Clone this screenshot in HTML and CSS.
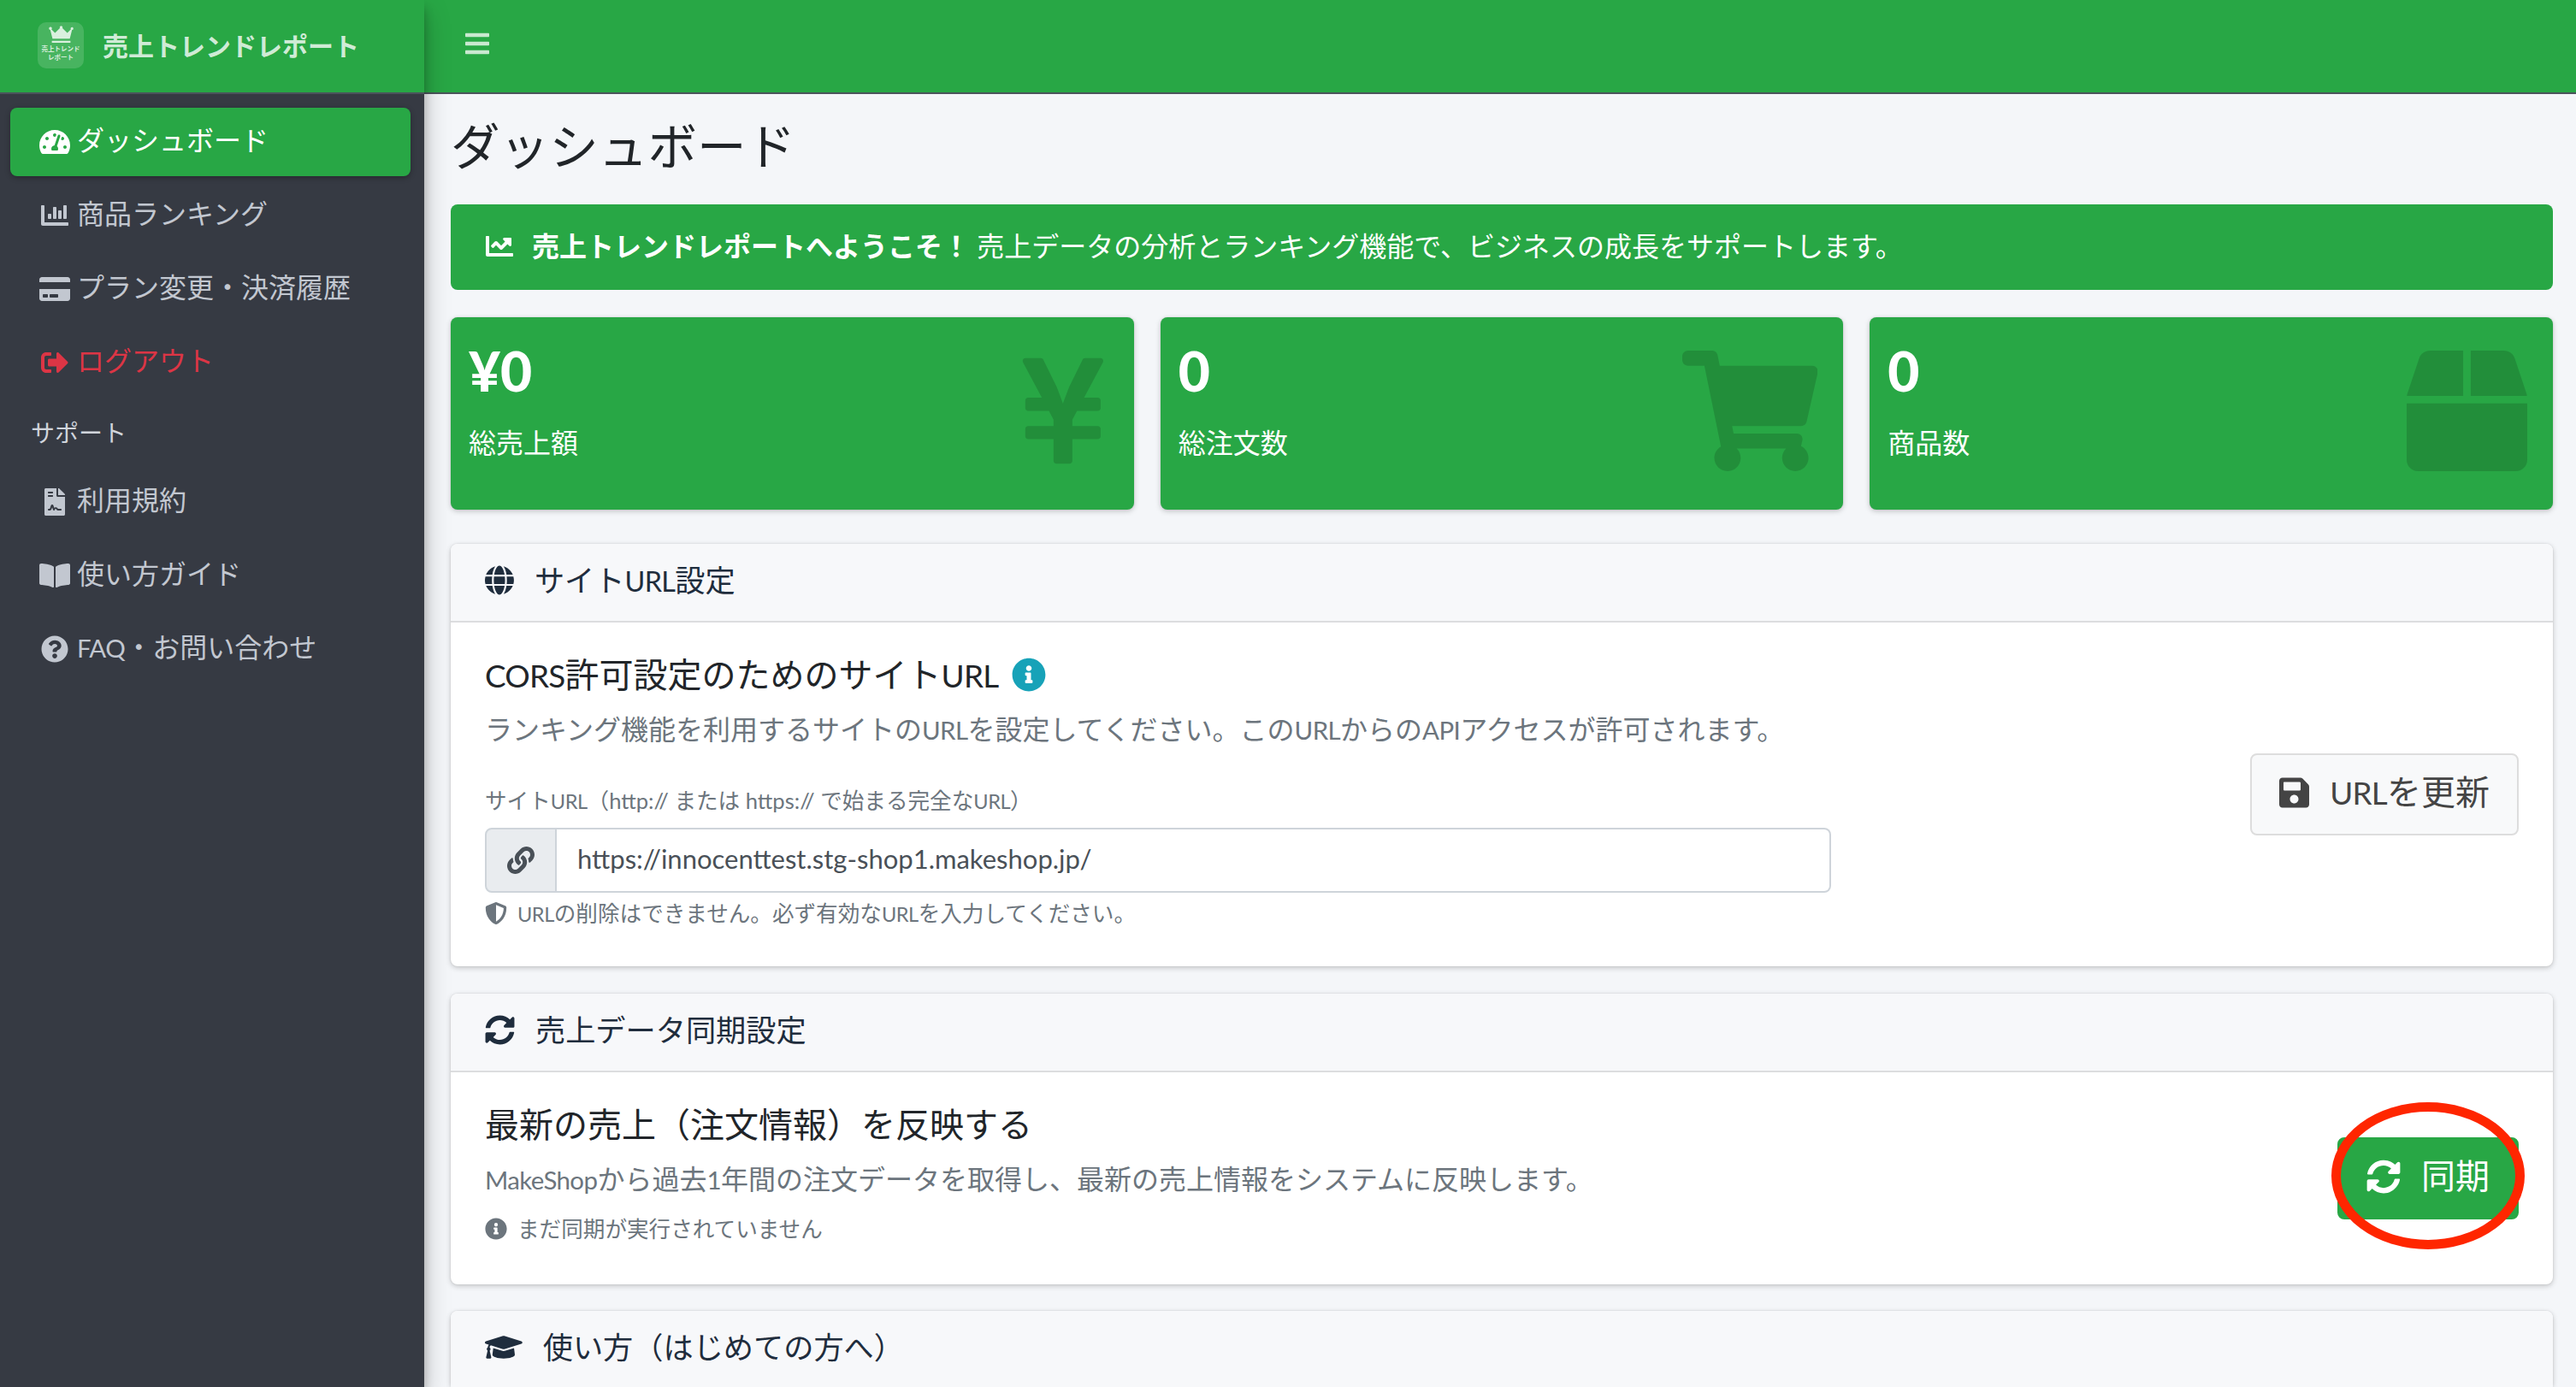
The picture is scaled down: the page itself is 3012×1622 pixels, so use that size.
FILE: index.html
```html
<!DOCTYPE html>
<html lang="ja">
<head>
    <meta charset="UTF-8">
    <meta name="viewport" content="width=device-width, initial-scale=1.0">
    <title>売上トレンドレポート</title>
    <link rel="stylesheet" href="styles.css">
</head>
<body>
<div class="wrapper">

    <aside class="sidebar">
        <div class="brand">
            <div class="brand-logo">
                <svg class="brand-crown" viewBox="0 0 30 22"><path d="M2 1.6a1.6 1.6 0 0 1 1 2.9L7.5 9 13.6 3a1.7 1.7 0 1 1 2.8 0L22.500 9 27 4.500a1.600 1.600 0 1 1 1.300.7L25.600 16H4.400L1.700 5.200A1.800 1.800 0 0 1 2 1.600zM3.600 18.500h22.800V21H3.600z"/></svg>
                <span class="brand-logo-text">売上トレンド<br>レポート</span>
            </div>
            <span class="brand-text">売上トレンドレポート</span>
        </div>
        <nav class="nav">
            <a class="nav-item active"><span class="nav-icon"><svg viewBox="0 0 576 512"><path d="M288 32C128.94 32 0 160.94 0 320c0 52.8 14.25 102.26 39.06 144.8 5.61 9.62 16.3 15.2 27.44 15.2h443c11.14 0 21.83-5.58 27.44-15.2C561.75 422.26 576 372.8 576 320c0-159.06-128.94-288-288-288zm0 64c14.71 0 26.58 10.13 30.32 23.65-1.11 2.26-2.64 4.23-3.45 6.67l-9.22 27.67c-5.13 3.49-10.97 6.01-17.64 6.01-17.67 0-32-14.33-32-32S270.33 96 288 96zM96 384c-17.67 0-32-14.33-32-32s14.33-32 32-32 32 14.33 32 32-14.33 32-32 32zm48-160c-17.67 0-32-14.33-32-32s14.33-32 32-32 32 14.33 32 32-14.33 32-32 32zm246.77-72.41l-61.33 184C343.13 347.33 352 364.54 352 384c0 11.72-3.38 22.55-8.88 32H232.88c-5.5-9.45-8.88-20.28-8.88-32 0-33.94 26.5-61.43 59.9-63.59l61.34-184.01c4.17-12.56 17.73-19.45 30.36-15.17 12.57 4.19 19.35 17.79 15.17 30.36zm14.66 57.2l15.52-46.55c3.47-1.29 7.13-2.23 11.05-2.23 17.67 0 32 14.33 32 32s-14.33 32-32 32c-11.38-.01-20.89-6.28-26.57-15.22zM480 384c-17.67 0-32-14.33-32-32s14.33-32 32-32 32 14.33 32 32-14.33 32-32 32z"/></svg></span>ダッシュボード</a>
            <a class="nav-item"><span class="nav-icon"><svg viewBox="0 0 512 512"><path d="M332.8 320h38.4c6.4 0 12.8-6.4 12.8-12.8V172.8c0-6.4-6.4-12.8-12.8-12.8h-38.4c-6.4 0-12.8 6.4-12.8 12.8v134.4c0 6.4 6.4 12.8 12.8 12.8zm96 0h38.4c6.4 0 12.8-6.4 12.8-12.8V76.8c0-6.4-6.4-12.8-12.8-12.8h-38.4c-6.4 0-12.8 6.4-12.8 12.8v230.4c0 6.4 6.4 12.8 12.8 12.8zm-288 0h38.4c6.4 0 12.8-6.4 12.8-12.8v-70.4c0-6.4-6.4-12.8-12.8-12.8h-38.4c-6.4 0-12.8 6.4-12.8 12.8v70.4c0 6.4 6.4 12.8 12.8 12.8zm96 0h38.4c6.4 0 12.8-6.4 12.8-12.8V108.8c0-6.4-6.4-12.8-12.8-12.8h-38.4c-6.4 0-12.8 6.4-12.8 12.8v198.4c0 6.4 6.4 12.8 12.8 12.8zM496 384H64V80c0-8.84-7.16-16-16-16H16C7.16 64 0 71.16 0 80v336c0 17.67 14.33 32 32 32h464c8.84 0 16-7.16 16-16v-32c0-8.84-7.16-16-16-16z"/></svg></span>商品ランキング</a>
            <a class="nav-item"><span class="nav-icon"><svg viewBox="0 0 576 512"><path d="M0 432c0 26.5 21.5 48 48 48h480c26.5 0 48-21.500 48-48V256H0v176zm192-68c0-6.600 5.400-12 12-12h136c6.600 0 12 5.400 12 12v40c0 6.600-5.400 12-12 12H204c-6.600 0-12-5.400-12-12v-40zm-128 0c0-6.600 5.400-12 12-12h72c6.600 0 12 5.400 12 12v40c0 6.600-5.400 12-12 12H76c-6.600 0-12-5.400-12-12v-40zM576 80v48H0V80c0-26.500 21.500-48 48-48h480c26.500 0 48 21.500 48 48z"/></svg></span>プラン変更・決済履歴</a>
            <a class="nav-item logout"><span class="nav-icon"><svg viewBox="0 0 512 512"><path d="M497 273L329 441c-15 15-41 4.500-41-17v-96H152c-13.300 0-24-10.700-24-24v-96c0-13.300 10.700-24 24-24h136V88c0-21.400 25.900-32 41-17l168 168c9.300 9.400 9.300 24.600 0 34zM192 436v-40c0-6.600-5.400-12-12-12H96c-17.700 0-32-14.300-32-32V160c0-17.700 14.300-32 32-32h84c6.600 0 12-5.400 12-12V76c0-6.600-5.400-12-12-12H96c-53 0-96 43-96 96v192c0 53 43 96 96 96h84c6.600 0 12-5.400 12-12z"/></svg></span>ログアウト</a>
            <div class="nav-header">サポート</div>
            <a class="nav-item"><span class="nav-icon"><svg viewBox="0 0 384 512"><path d="M224 136V0H24C10.700 0 0 10.700 0 24v464c0 13.300 10.700 24 24 24h336c13.300 0 24-10.700 24-24V160H248c-13.200 0-24-10.800-24-24zM64 72c0-4.420 3.580-8 8-8h80c4.420 0 8 3.580 8 8v16c0 4.420-3.580 8-8 8H72c-4.420 0-8-3.580-8-8V72zm0 64c0-4.420 3.580-8 8-8h80c4.420 0 8 3.580 8 8v16c0 4.420-3.580 8-8 8H72c-4.420 0-8-3.580-8-8v-16zm192.810 248H304c8.840 0 16 7.160 16 16s-7.160 16-16 16h-47.190c-16.450 0-31.270-9.140-38.640-23.860-2.950-5.920-8.090-6.520-10.170-6.520s-7.220.59-10.020 6.190l-7.670 15.340a15.986 15.986 0 0 1-14.310 8.840c-.38 0-.75-.02-1.140-.05-6.450-.45-12-4.750-14.030-10.890L144 354.590l-10.610 31.880c-5.890 17.660-22.380 29.530-41 29.530H80c-8.840 0-16-7.160-16-16s7.160-16 16-16h12.390c4.830 0 9.110-3.080 10.640-7.660l18.190-54.640c3.300-9.810 12.440-16.410 22.780-16.410s19.480 6.590 22.770 16.410l13.880 41.640c19.770-16.190 54.050-9.700 66 14.160 2.020 4.060 5.960 6.500 10.160 6.500zM377 105L279.100 7c-4.500-4.500-10.600-7-17-7H256v128h128v-6.100c0-6.300-2.500-12.400-7-16.900z"/></svg></span>利用規約</a>
            <a class="nav-item"><span class="nav-icon"><svg viewBox="0 0 576 512"><path d="M542.220 32.050c-54.800 3.110-163.720 14.430-230.960 55.590-4.640 2.840-7.270 7.890-7.270 13.170v363.870c0 11.550 12.630 18.850 23.280 13.490 69.180-34.820 169.230-44.320 218.700-46.920 16.890-.89 30.020-14.430 30.020-30.660V62.750c.01-17.710-15.350-31.740-33.770-30.700zM264.730 87.640C197.500 46.480 88.580 35.170 33.780 32.050 15.360 31.010 0 45.040 0 62.750V400.600c0 16.240 13.130 29.780 30.020 30.660 49.490 2.600 149.590 12.110 218.770 46.950 10.620 5.350 23.210-1.940 23.210-13.460V100.630c0-5.290-2.620-10.140-7.270-12.990z"/></svg></span>使い方ガイド</a>
            <a class="nav-item"><span class="nav-icon"><svg viewBox="0 0 512 512"><path d="M504 256c0 136.997-111.043 248-248 248S8 392.997 8 256C8 119.083 119.043 8 256 8s248 111.083 248 248zM262.655 90c-54.497 0-89.255 22.957-116.549 63.758-3.536 5.286-2.353 12.415 2.715 16.258l34.699 26.310c5.205 3.947 12.621 3.008 16.665-2.122 17.864-22.658 30.113-35.797 57.303-35.797 20.429 0 45.698 13.148 45.698 32.958 0 14.976-12.363 22.667-32.534 33.976C247.128 238.528 216 254.941 216 296v4c0 6.627 5.373 12 12 12h56c6.627 0 12-5.373 12-12v-1.333c0-28.462 83.186-29.647 83.186-106.667 0-58.002-60.165-102-116.531-102zM256 338c-25.365 0-46 20.635-46 46 0 25.364 20.635 46 46 46s46-20.636 46-46c0-25.365-20.635-46-46-46z"/></svg></span><span><span class="en">FAQ</span>・お問い合わせ</span></a>
        </nav>
    </aside>

    <div class="main">
        <header class="topbar">
            <svg class="menu-icon" viewBox="0 0 448 512"><path d="M16 132h416c8.837 0 16-7.163 16-16V76c0-8.837-7.163-16-16-16H16C7.163 60 0 67.163 0 76v40c0 8.837 7.163 16 16 16zm0 160h416c8.837 0 16-7.163 16-16v-40c0-8.837-7.163-16-16-16H16c-8.837 0-16 7.163-16 16v40c0 8.837 7.163 16 16 16zm0 160h416c8.837 0 16-7.163 16-16v-40c0-8.837-7.163-16-16-16H16c-8.837 0-16 7.163-16 16v40c0 8.837 7.163 16 16 16z"/></svg>
        </header>

        <main class="content">
            <h1 class="page-title">ダッシュボード</h1>

            <div class="welcome">
                <svg class="welcome-icon" viewBox="0 0 512 512"><path d="M496 384H64V80c0-8.840-7.160-16-16-16H16C7.160 64 0 71.160 0 80v336c0 17.670 14.330 32 32 32h464c8.840 0 16-7.160 16-16v-32c0-8.840-7.160-16-16-16zM464 96H345.940c-21.380 0-32.090 25.850-16.970 40.970l32.400 32.400L288 242.750l-73.370-73.370c-12.500-12.500-32.760-12.500-45.250 0l-68.690 68.690c-6.250 6.250-6.250 16.380 0 22.630l22.620 22.620c6.250 6.250 16.380 6.250 22.630 0L192 237.250l73.370 73.370c12.500 12.500 32.760 12.500 45.250 0l96-96 32.400 32.400c15.120 15.120 40.970 4.410 40.970-16.970V112c.01-8.840-7.150-16-15.990-16z"/></svg>
                <p><strong>売上トレンドレポートへようこそ！</strong> 売上データの分析とランキング機能で、ビジネスの成長をサポートします。</p>
            </div>

            <div class="stats">
                <div class="stat">
                    <div class="stat-value">¥0</div>
                    <div class="stat-label">総売上額</div>
                    <svg class="stat-icon" viewBox="0 0 384 512"><path d="M351.200 32h-65.300c-4.600 0-8.800 2.600-10.800 6.700l-55.400 113.200c-14.500 34.700-27.100 71.900-27.100 71.900h-1.300s-12.600-37.200-27.100-71.900L108.800 38.700c-2-4.100-6.200-6.700-10.800-6.700H32.800c-9.100 0-14.800 9.700-10.600 17.600L102.300 200H44c-6.600 0-12 5.400-12 12v32c0 6.600 5.400 12 12 12h88.200l19.800 37.200V320H44c-6.600 0-12 5.400-12 12v32c0 6.600 5.400 12 12 12h108v92c0 6.600 5.400 12 12 12h56c6.600 0 12-5.400 12-12v-92h108c6.600 0 12-5.400 12-12v-32c0-6.600-5.400-12-12-12H232v-26.800l19.800-37.200H340c6.600 0 12-5.400 12-12v-32c0-6.600-5.400-12-12-12h-58.300l80.100-150.400c4.200-7.900-1.500-17.600-10.600-17.600z"/></svg>
                </div>
                <div class="stat">
                    <div class="stat-value">0</div>
                    <div class="stat-label">総注文数</div>
                    <svg class="stat-icon" viewBox="0 0 576 512"><path d="M528.120 301.319l47.273-208C578.806 78.301 567.391 64 551.990 64H159.208l-9.166-44.810C147.758 8.021 137.930 0 126.529 0H24C10.745 0 0 10.745 0 24v16c0 13.255 10.745 24 24 24h69.883l70.248 343.435C147.325 417.100 136 435.222 136 456c0 30.928 25.072 56 56 56s56-25.072 56-56c0-15.674-6.447-29.835-16.824-40h209.647C430.447 426.165 424 440.326 424 456c0 30.928 25.072 56 56 56s56-25.072 56-56c0-22.172-12.888-41.332-31.579-50.405l5.517-24.276c3.413-15.018-8.002-29.319-23.403-29.319H218.117l-6.545-32h293.145c11.206 0 20.920-7.754 23.403-18.681z"/></svg>
                </div>
                <div class="stat">
                    <div class="stat-value">0</div>
                    <div class="stat-label">商品数</div>
                    <svg class="stat-icon" viewBox="0 0 512 512"><path d="M509.500 184.600L458.900 32.800C452.400 13.200 434.100 0 413.400 0H272v192h238.700c-.4-2.500-.4-5-1.200-7.400zM240 0H98.600c-20.700 0-39 13.200-45.500 32.800L2.500 184.600c-.8 2.400-.8 4.900-1.200 7.400H240V0zM0 224v240c0 26.500 21.500 48 48 48h416c26.500 0 48-21.500 48-48V224H0z"/></svg>
                </div>
            </div>

            <section class="card">
                <div class="card-header">
                    <svg class="card-icon" viewBox="0 0 496 512"><path d="M336.500 160C322 70.700 287.800 8 248 8s-74 62.700-88.500 152h177zM152 256c0 22.200 1.200 43.500 3.300 64h185.300c2.100-20.500 3.300-41.800 3.300-64s-1.200-43.500-3.300-64H155.300c-2.100 20.500-3.300 41.800-3.300 64zm324.700-96c-28.600-67.900-86.500-120.400-158-141.600 24.400 33.800 41.200 84.700 50 141.600h108zM177.200 18.400C105.800 39.600 47.800 92.100 19.300 160h108c8.700-56.900 25.500-107.800 49.900-141.600zM487.400 192H372.700c2.100 21 3.300 42.500 3.300 64s-1.200 43-3.300 64h114.600c5.500-20.500 8.600-41.800 8.600-64s-3.100-43.500-8.500-64zM120 256c0-21.500 1.200-43 3.300-64H8.600C3.200 212.500 0 233.800 0 256s3.200 43.500 8.600 64h114.600c-2-21-3.200-42.500-3.200-64zm39.500 96c14.500 89.300 48.700 152 88.500 152s74-62.700 88.500-152h-177zm159.300 141.600c71.400-21.200 129.400-73.700 158-141.600h-108c-8.800 56.900-25.600 107.800-50 141.600zM19.300 352c28.600 67.900 86.500 120.400 158 141.600-24.400-33.800-41.200-84.700-50-141.600h-108z"/></svg>
                    <span>サイト<span class="en">URL</span>設定</span>
                </div>
                <div class="card-body">
                    <div class="url-form">
                        <h5 class="card-title"><span><span class="en">CORS</span>許可設定のためのサイト<span class="en">URL</span></span> <svg class="title-info" viewBox="0 0 512 512"><path d="M256 8C119.043 8 8 119.083 8 256c0 136.997 111.043 248 248 248s248-111.003 248-248C504 119.083 392.957 8 256 8zm0 110c23.196 0 42 18.804 42 42s-18.804 42-42 42-42-18.804-42-42 18.804-42 42-42zm56 254c0 6.627-5.373 12-12 12h-88c-6.627 0-12-5.373-12-12v-24c0-6.627 5.373-12 12-12h12v-64h-12c-6.627 0-12-5.373-12-12v-24c0-6.627 5.373-12 12-12h64c6.627 0 12 5.373 12 12v100h12c6.627 0 12 5.373 12 12v24z"/></svg></h5>
                        <p class="card-desc">ランキング機能を利用するサイトの<span class="en">URL</span>を設定してください。この<span class="en">URL</span>からの<span class="en">API</span>アクセスが許可されます。</p>
                        <label class="field-label">サイト<span class="en">URL</span>（http:// または https:// で始まる完全な<span class="en">URL</span>）</label>
                        <div class="input-group">
                            <span class="input-addon"><svg viewBox="0 0 512 512"><path d="M326.612 185.391c59.747 59.809 58.927 155.698.36 214.590-.11.12-.24.25-.36.37l-67.200 67.200c-59.270 59.270-155.699 59.262-214.960 0-59.270-59.260-59.270-155.700 0-214.960l37.106-37.106c9.840-9.840 26.786-3.300 27.294 10.606.648 17.722 3.826 35.527 9.690 52.721 1.986 5.822.567 12.262-3.783 16.612l-13.087 13.087c-28.026 28.026-28.905 73.660-1.155 101.960 28.024 28.579 74.086 28.749 102.325.51l67.200-67.190c28.191-28.191 28.073-73.757 0-101.830-3.701-3.694-7.429-6.564-10.341-8.569a16.037 16.037 0 0 1-6.947-12.606c-.396-10.567 3.348-21.456 11.698-29.806l21.054-21.055c5.521-5.521 14.182-6.199 20.584-1.731a152.482 152.482 0 0 1 20.522 17.197zM467.547 44.449c-59.261-59.262-155.690-59.270-214.960 0l-67.200 67.200c-.12.12-.25.25-.36.37-58.566 58.892-59.387 154.781.36 214.590a152.454 152.454 0 0 0 20.521 17.196c6.402 4.468 15.064 3.789 20.584-1.731l21.054-21.055c8.350-8.350 12.094-19.239 11.698-29.806a16.037 16.037 0 0 0-6.947-12.606c-2.912-2.005-6.640-4.875-10.341-8.569-28.073-28.073-28.191-73.639 0-101.830l67.200-67.190c28.239-28.239 74.300-28.069 102.325.51 27.750 28.300 26.872 73.934-1.155 101.960l-13.087 13.087c-4.350 4.350-5.769 10.790-3.783 16.612 5.864 17.194 9.042 34.999 9.690 52.721.509 13.906 17.454 20.446 27.294 10.606l37.106-37.106c59.271-59.259 59.271-155.699.001-214.959z"/></svg></span>
                            <input class="input" type="text" value="https://innocenttest.stg-shop1.makeshop.jp/">
                        </div>
                        <div class="help">
                            <svg viewBox="0 0 512 512"><path d="M466.500 83.700l-192-80a48.150 48.150 0 0 0-36.900 0l-192 80C27.700 91.100 16 108.600 16 128c0 198.500 114.500 335.700 221.500 380.300 11.800 4.900 25.100 4.900 36.900 0C360.100 472.600 496 349.300 496 128c0-19.400-11.700-36.900-29.500-44.300zM256.100 446.300l-.1-381 175.900 73.300c-3.300 151.400-82.100 261.100-175.800 307.700z"/></svg>
                            <span><span class="en">URL</span>の削除はできません。必ず有効な<span class="en">URL</span>を入力してください。</span>
                        </div>
                    </div>
                    <button class="btn btn-light btn-url">
                        <svg viewBox="0 0 448 512"><path d="M433.941 129.941l-83.882-83.882A48 48 0 0 0 316.118 32H48C21.490 32 0 53.490 0 80v352c0 26.510 21.490 48 48 48h352c26.510 0 48-21.490 48-48V163.882a48 48 0 0 0-14.059-33.941zM224 416c-35.346 0-64-28.654-64-64 0-35.346 28.654-64 64-64s64 28.654 64 64c0 35.346-28.654 64-64 64zm96-304.520V212c0 6.627-5.373 12-12 12H76c-6.627 0-12-5.373-12-12V108c0-6.627 5.373-12 12-12h228.520c3.183 0 6.235 1.264 8.485 3.515l3.480 3.480A11.996 11.996 0 0 1 320 111.480z"/></svg>
                        <span class="btn-text"><span class="en">URL</span>を更新</span>
                    </button>
                </div>
            </section>

            <section class="card">
                <div class="card-header">
                    <svg class="card-icon" viewBox="0 0 512 512"><path d="M370.720 133.280C339.458 104.008 298.888 87.962 255.848 88c-77.458.068-144.328 53.178-162.791 126.850-1.344 5.363-6.122 9.150-11.651 9.150H24.103c-7.498 0-13.194-6.807-11.807-14.176C33.933 94.924 134.813 8 256 8c66.448 0 126.791 26.136 171.315 68.685L463.030 40.970C478.149 25.851 504 36.559 504 57.941V192c0 13.255-10.745 24-24 24H345.941c-21.382 0-32.090-25.851-16.971-40.971l41.750-41.749zM32 296h134.059c21.382 0 32.090 25.851 16.971 40.971l-41.750 41.750c31.262 29.273 71.835 45.319 114.876 45.280 77.418-.07 144.315-53.144 162.787-126.849 1.344-5.363 6.122-9.150 11.651-9.150h57.304c7.498 0 13.194 6.807 11.807 14.176C478.067 417.076 377.187 504 256 504c-66.448 0-126.791-26.136-171.315-68.685L48.970 471.030C33.851 486.149 8 475.441 8 454.059V320c0-13.255 10.745-24 24-24z"/></svg>
                    <span>売上データ同期設定</span>
                </div>
                <div class="card-body sync-body">
                    <div>
                        <h5 class="card-title">最新の売上（注文情報）を反映する</h5>
                        <p class="card-desc"><span class="en">MakeShop</span>から過去<span class="en">1</span>年間の注文データを取得し、最新の売上情報をシステムに反映します。</p>
                        <div class="help sync-note">
                            <svg viewBox="0 0 512 512"><path d="M256 8C119.043 8 8 119.083 8 256c0 136.997 111.043 248 248 248s248-111.003 248-248C504 119.083 392.957 8 256 8zm0 110c23.196 0 42 18.804 42 42s-18.804 42-42 42-42-18.804-42-42 18.804-42 42-42zm56 254c0 6.627-5.373 12-12 12h-88c-6.627 0-12-5.373-12-12v-24c0-6.627 5.373-12 12-12h12v-64h-12c-6.627 0-12-5.373-12-12v-24c0-6.627 5.373-12 12-12h64c6.627 0 12 5.373 12 12v100h12c6.627 0 12 5.373 12 12v24z"/></svg>
                            まだ同期が実行されていません
                        </div>
                    </div>
                    <div class="sync-action">
                        <button class="btn btn-green">
                            <svg viewBox="0 0 512 512"><path d="M370.720 133.280C339.458 104.008 298.888 87.962 255.848 88c-77.458.068-144.328 53.178-162.791 126.850-1.344 5.363-6.122 9.150-11.651 9.150H24.103c-7.498 0-13.194-6.807-11.807-14.176C33.933 94.924 134.813 8 256 8c66.448 0 126.791 26.136 171.315 68.685L463.030 40.970C478.149 25.851 504 36.559 504 57.941V192c0 13.255-10.745 24-24 24H345.941c-21.382 0-32.090-25.851-16.971-40.971l41.750-41.749zM32 296h134.059c21.382 0 32.090 25.851 16.971 40.971l-41.750 41.750c31.262 29.273 71.835 45.319 114.876 45.280 77.418-.07 144.315-53.144 162.787-126.849 1.344-5.363 6.122-9.150 11.651-9.150h57.304c7.498 0 13.194 6.807 11.807 14.176C478.067 417.076 377.187 504 256 504c-66.448 0-126.791-26.136-171.315-68.685L48.970 471.030C33.851 486.149 8 475.441 8 454.059V320c0-13.255 10.745-24 24-24z"/></svg>
                            <span class="btn-text">同期</span>
                        </button>
                        <svg class="highlight" viewBox="0 0 226 172"><ellipse cx="113" cy="86" rx="107.500" ry="80.500"/></svg>
                    </div>
                </div>
            </section>

            <section class="card card-last">
                <div class="card-header">
                    <svg class="card-icon" viewBox="0 0 640 512"><path d="M622.340 153.200L343.400 67.500c-15.200-4.670-31.600-4.670-46.790 0L17.660 153.200c-23.540 7.230-23.540 38.360 0 45.590l48.630 14.940c-10.670 13.190-17.230 29.280-17.880 46.900C38.780 266.150 32 276.110 32 288c0 10.780 5.680 19.850 13.860 25.650L20.330 428.530C18.110 438.520 25.710 448 35.940 448h56.110c10.240 0 17.840-9.480 15.620-19.470L82.140 313.650C90.320 307.850 96 298.780 96 288c0-11.570-6.470-21.250-15.660-26.870.76-15.020 8.440-28.300 20.690-36.720L296.600 284.500c9.060 2.780 26.440 6.250 46.790 0l278.950-85.700c23.550-7.240 23.550-38.360 0-45.600zM352.790 315.090c-28.530 8.760-52.840 3.920-65.590 0l-145.020-44.550L128 384c0 35.350 85.960 64 192 64s192-28.650 192-64l-14.180-113.470-145.030 44.560z"/></svg>
                    <span>使い方（はじめての方へ）</span>
                </div>
            </section>
        </main>
    </div>

</div>
</body>
</html>
```

FILE: styles.css
```css
* {
    box-sizing: border-box;
}

html, body {
    height: 100%;
    margin: 0;
    overflow: hidden;
}

body {
    font-family: Lato, "Noto Sans CJK JP", sans-serif;
    font-size: 32px;
    line-height: 48px;
    color: #212529;
    background-color: #f4f6f9;
}

svg {
    fill: currentColor;
    flex-shrink: 0;
}

/* latin runs inside japanese text */
.en {
    font-size: 0.92em;
    line-height: 1;
    letter-spacing: -0.02em;
}

.wrapper {
    display: flex;
    height: 100%;
}

/* sidebar */
.sidebar {
    position: relative;
    z-index: 2;
    width: 496px;
    flex-shrink: 0;
    background-color: #363a43;
    box-shadow: 0 14px 28px rgba(0, 0, 0, 0.25), 0 10px 10px rgba(0, 0, 0, 0.22);
}

.brand {
    display: flex;
    align-items: center;
    gap: 22px;
    height: 110px;
    padding: 0 0 2px 44px;
    background-color: #28a745;
    border-bottom: 2px solid #4b545c;
}

.brand-logo {
    display: flex;
    flex-direction: column;
    align-items: center;
    width: 54px;
    height: 54px;
    padding-top: 4px;
    border-radius: 10px;
    color: rgba(255, 255, 255, 0.8);
    background-color: rgba(255, 255, 255, 0.15);
}

.brand-crown {
    width: 29px;
    height: 21px;
}

.brand-logo-text {
    margin-top: 2px;
    font-size: 7.5px;
    line-height: 10px;
    font-weight: 700;
    text-align: center;
    white-space: nowrap;
}

.brand-text {
    font-size: 30px;
    font-weight: 700;
    color: rgba(255, 255, 255, 0.8);
}

.nav {
    display: flex;
    flex-direction: column;
    gap: 6px;
    padding: 16px 16px 0 12px;
}

.nav-item {
    display: flex;
    align-items: center;
    height: 80px;
    padding: 0 0 4px 32px;
    border-radius: 8px;
    color: #c2c7d0;
}

.nav-item.active {
    color: #fff;
    background-color: #28a745;
    box-shadow: 0 2px 6px rgba(0, 0, 0, 0.3);
}

.nav-item.logout {
    color: #dc3545;
}

.nav-icon {
    display: flex;
    justify-content: center;
    width: 40px;
    margin: 4px 6px 0 0;
}

.nav-icon svg {
    height: 32px;
}

.nav-header {
    display: flex;
    align-items: center;
    height: 71px;
    padding-left: 24px;
    font-size: 28px;
    color: #d0d4db;
}

/* top bar */
.main {
    flex: 1;
    min-width: 0;
}

.topbar {
    display: flex;
    align-items: center;
    height: 110px;
    padding: 0 0 6px 48px;
    color: rgba(255, 255, 255, 0.75);
    background-color: #28a745;
    border-bottom: 2px solid #4b545c;
}

.menu-icon {
    height: 32px;
}

.content {
    padding: 0 27px 0 31px;
}

.page-title {
    margin: 0;
    padding-top: 26px;
    font-size: 57.6px;
    line-height: 69px;
    font-weight: 400;
}

/* welcome banner */
.welcome {
    display: flex;
    align-items: center;
    gap: 22px;
    height: 100px;
    margin-top: 34px;
    padding: 0 0 3px 41px;
    border-radius: 8px;
    color: #fff;
    background-color: #28a745;
}

.welcome p {
    margin: 0;
}

.welcome-icon {
    height: 32px;
}

/* stat boxes */
.stats {
    display: grid;
    grid-template-columns: repeat(3, 1fr);
    gap: 31px;
    margin-top: 32px;
}

.stat {
    position: relative;
    height: 225px;
    padding: 25px 21px 21px;
    border-radius: 8px;
    color: #fff;
    background-color: #28a745;
    box-shadow: 0 0 2px rgba(0, 0, 0, 0.125), 0 2px 6px rgba(0, 0, 0, 0.2);
}

.stat-value {
    font-size: 64px;
    line-height: 76px;
    font-weight: 900;
}

.stat-label {
    margin-top: 22px;
}

.stat-icon {
    position: absolute;
    top: 39px;
    right: 30px;
    height: 141px;
    color: rgba(0, 0, 0, 0.15);
}

/* cards */
.card {
    margin-top: 40px;
    border-radius: 8px;
    background-color: #fff;
    box-shadow: 0 0 2px rgba(0, 0, 0, 0.125), 0 2px 6px rgba(0, 0, 0, 0.2);
}

.card + .card {
    margin-top: 32px;
}

.card + .card-last {
    margin-top: 31px;
}

.card-header {
    display: flex;
    align-items: center;
    gap: 24px;
    height: 92px;
    padding: 0 0 6px 40px;
    font-size: 35.2px;
    color: #1f2d3d;
    background-color: #f7f8fa;
    border-bottom: 2px solid #dcdddf;
    border-radius: 8px 8px 0 0;
}

.card-icon {
    height: 35px;
}

.card-body {
    display: flex;
    align-items: center;
    justify-content: space-between;
    padding: 37px 40px 43px;
}

.sync-body {
    padding-bottom: 46px;
}

.url-form {
    width: 1574px;
}

.card-title {
    display: flex;
    align-items: center;
    gap: 16px;
    margin: 0;
    font-size: 40px;
    line-height: 48px;
    font-weight: 400;
}

.title-info {
    height: 40px;
    color: #17a2b8;
}

.card-desc {
    margin: 16px 0 0;
    color: #6c757d;
}

.field-label {
    display: block;
    margin-top: 39px;
    font-size: 25.6px;
    line-height: 40px;
    color: #6c757d;
}

.input-group {
    display: flex;
    height: 76px;
    margin-top: 12px;
}

.input-addon {
    display: flex;
    align-items: center;
    justify-content: center;
    width: 84px;
    color: #495057;
    background-color: #e9ecef;
    border: 2px solid #ced4da;
    border-radius: 8px 0 0 8px;
}

.input-addon svg {
    height: 32px;
}

.input {
    flex: 1;
    padding: 0 24px 4px;
    font: inherit;
    font-size: 31px;
    color: #495057;
    background-color: #fff;
    border: 2px solid #ced4da;
    border-left: none;
    border-radius: 0 8px 8px 0;
    outline: none;
}

.help {
    display: flex;
    align-items: center;
    gap: 12px;
    margin-top: 5px;
    font-size: 25.6px;
    line-height: 38px;
    color: #6c757d;
}

.help svg {
    height: 26px;
}

.sync-note {
    margin-top: 15px;
}

/* buttons */
.btn {
    display: flex;
    align-items: center;
    gap: 24px;
    height: 96px;
    padding: 0 32px 4px;
    font-family: inherit;
    font-size: 40px;
    border-radius: 8px;
}

.btn svg {
    height: 40px;
}

.btn-text {
    padding-bottom: 6px;
}

.btn-light {
    color: #444;
    background-color: #f8f9fa;
    border: 2px solid #ddd;
}

.btn-url {
    margin-top: 6px;
}

.btn-green {
    color: #fff;
    background-color: #28a745;
    border: 2px solid #28a745;
}

.sync-action {
    position: relative;
    margin-top: 9px;
}

.highlight {
    position: absolute;
    top: -41px;
    right: -7px;
    width: 226px;
    height: 172px;
    fill: none;
    stroke: #ff2600;
    stroke-width: 11px;
}
```
